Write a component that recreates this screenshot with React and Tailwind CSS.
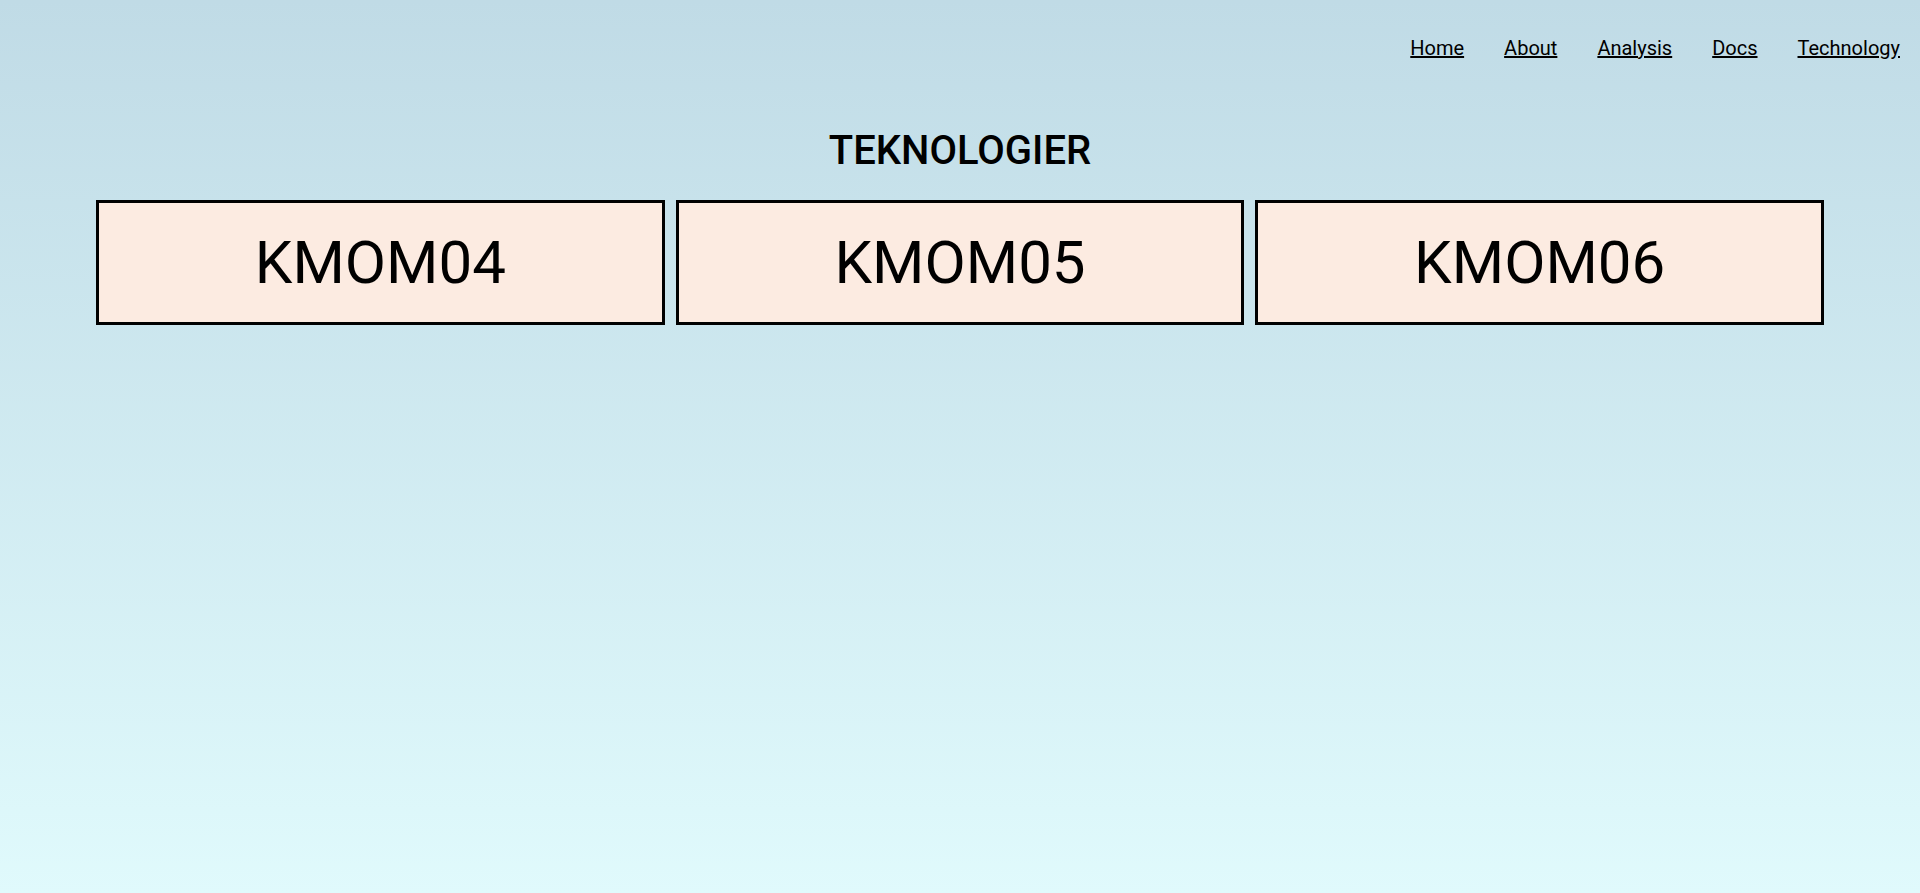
import React from 'react';

const links = ['Home', 'About', 'Analysis', 'Docs', 'Technology'];
const courses = ['KMOM04', 'KMOM05', 'KMOM06'];

function Nav() {
    return (
        <nav className='h-24 flex items-center justify-end'>
            {links.map((link) => (
                <a key={link} href='#' className='mx-5 text-[20px] text-black underline'>
                    {link}
                </a>
            ))}
        </nav>
    );
}

function CourseCard({ name }) {
    return (
        <div className='flex-1 h-[125px] flex items-center justify-center bg-[#fcebe1] border-[3px] border-black'>
            <span className='text-[60px] text-black'>{name}</span>
        </div>
    );
}

export default function App() {
    return (
        <div
            className='min-h-screen bg-gradient-to-b from-[#c0dbe6] to-[#e0fafc]'
            style={{ fontFamily: 'Roboto, "Liberation Sans", sans-serif' }}
        >
            <Nav />
            <main className='px-[96px]'>
                <h1 className='mt-[31px] text-center text-[40px] leading-[48px] font-medium text-black'>
                    TEKNOLOGIER
                </h1>
                <div className='mt-[25px] flex gap-[11px]'>
                    {courses.map((c) => (
                        <CourseCard key={c} name={c} />
                    ))}
                </div>
            </main>
        </div>
    );
}
